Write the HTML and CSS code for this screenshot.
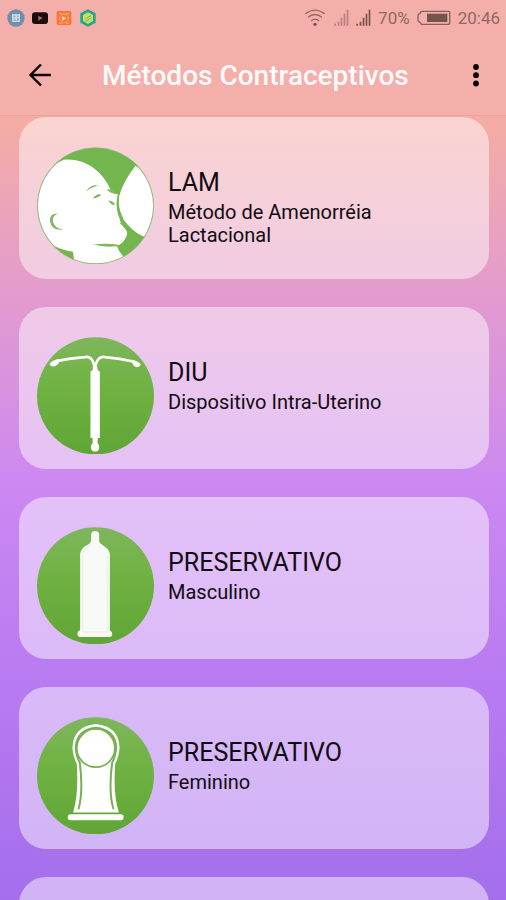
FILE: index.html
```html
<!DOCTYPE html>
<html lang="pt-BR">
<head>
<meta charset="utf-8">
<meta name="viewport" content="width=device-width, initial-scale=1">
<title>Métodos Contraceptivos</title>
<link rel="stylesheet" href="styles.css">
</head>
<body>
<header class="header">
  <div class="status">
    <div class="status-apps">
      <svg width="18" height="18" viewBox="0 0 54 54" aria-hidden="true"><circle cx="27" cy="27" r="26" fill="#6d90ac"/><path d="M15 15h24v24H15z" fill="#c9d8e8"/><path d="M20 20h5v5h-5zM30 20h5v3h-5zM30 28h5v7h-5zM20 31h6v4h-6z" fill="#8ba3bf"/></svg>
      <svg width="18" height="18" viewBox="0 0 54 54" aria-hidden="true"><rect x="3" y="10" width="48" height="35" rx="9" fill="#1c0d0c"/><path d="M22 20l13 7-13 8z" fill="#9d716e"/></svg>
      <svg width="18" height="18" viewBox="0 0 54 54" aria-hidden="true"><rect x="5" y="6" width="44" height="42" rx="5" fill="#fb7430"/><circle cx="27" cy="28" r="13" fill="none" stroke="#ffb488" stroke-width="3"/><path d="M12 13h8M34 13h8M12 43h8M34 43h8" stroke="#ffb488" stroke-width="3"/><path d="M22 22l12 6-12 7z" fill="#ffe1cf"/></svg>
      <svg width="18" height="18" viewBox="0 0 54 54" aria-hidden="true"><path d="M27 1l23 12v28L27 53 4 41V13z" fill="#24a58c"/><path d="M27 10l15 8v18l-15 9-15-9V18z" fill="#c7dd63"/><path d="M36 20L20 29M35 28L19 37" stroke="#7fb562" stroke-width="3"/></svg>
    </div>
    <div class="status-info">
      <svg class="wifi" width="20" height="18" viewBox="0 0 60 54" fill="none" stroke="#916662" stroke-width="4" aria-hidden="true"><path d="M1 14Q30-7 59 14M9 25Q30 8 51 25M18 36Q30 25 42 36"/><circle cx="30" cy="46" r="5" fill="#765350" stroke="none"/></svg>
      <svg class="signal" width="15" height="18" viewBox="0 0 45 54" aria-hidden="true"><path d="M1 44h5v6H1zM11 38h5v12h-5zM20 26h5v24h-5zM29 14h5v36h-5zM38 2h5v48h-5z" fill="#b9817c"/></svg>
      <svg class="signal" width="15" height="18" viewBox="0 0 45 54" aria-hidden="true"><path d="M1 44h5v6H1zM11 38h5v12h-5zM20 26h5v24h-5zM29 14h5v36h-5zM38 2h5v48h-5z" fill="#75524f"/></svg>
      <span>70%</span>
      <svg class="battery" width="34" height="18" viewBox="0 0 102 54" aria-hidden="true"><path d="M15 7h80q3 0 3 3v33q0 3-3 3H15q-4 0-5-5l-2-2q-5-1-5-6v-13q0-5 5-6l2-2q0-5 5-5z" fill="none" stroke="#85605d" stroke-width="4"/><path d="M30 14h61v25H30z" fill="#75534f"/></svg>
      <span>20:46</span>
    </div>
  </div>
  <div class="toolbar">
    <button class="icon-button" aria-label="Voltar"><svg width="24" height="24" viewBox="0 0 24 24" fill="none" stroke="#0b0707" stroke-width="2.400" aria-hidden="true"><path d="M23 11H2.500M13 .5L2.500 11L13 21.500"/></svg></button>
    <h1>Métodos Contraceptivos</h1>
    <button class="icon-button" aria-label="Mais opções"><svg width="24" height="24" viewBox="0 0 24 24" fill="#050303" aria-hidden="true"><circle cx="12" cy="3" r="2.900"/><circle cx="12" cy="11.200" r="2.900"/><circle cx="12" cy="19.500" r="2.900"/></svg></button>
  </div>
</header>
<svg class="defs" width="0" height="0" aria-hidden="true"><defs>
  <linearGradient id="green" x1="0" y1="0" x2="0" y2="1"><stop offset="0" stop-color="#7eb65c"/><stop offset=".4" stop-color="#70b344"/><stop offset="1" stop-color="#60a535"/></linearGradient>
  <clipPath id="disc"><circle cx="255" cy="286" r="172"/></clipPath>
</defs></svg>
<main class="list">
  <a class="card" href="#lam">
    <svg class="picture" viewBox="80 110 350 350" aria-hidden="true">
      <circle cx="255" cy="286" r="174" fill="#73b650" stroke="#9bb68d" stroke-width="2"/>
      <g clip-path="url(#disc)">
        <path d="M60 250Q110 166 160 148C220 143 275 177 303 244Q308 251 323 251L319 267Q316 300 327 324Q330 342 347 359Q353 371 345 382Q336 401 318 405Q326 429 348 445L330 480H190Q193 446 187 423Q150 418 122 401L60 350Z" fill="#fff"/>
        <path d="M372 165Q335 213 325 255Q320 294 336 323Q363 362 398 378L450 360V210Z" fill="#fff"/>
        <path d="M372 165Q335 213 323 257Q318 292 336 326" fill="none" stroke="#73b650" stroke-width="5"/>
        <path d="M226 244Q242 218 264 226Q244 229 226 244ZM246 264Q259 248 272 252Q267 261 246 264ZM288 236Q301 252 318 249L306 239ZM294 269Q299 284 314 283L307 274ZM327 339Q334 346 347 347L337 334ZM248 402Q285 397 322 402L318 407Q280 411 248 402ZM145 309Q116 307 119 333Q124 361 158 357Q131 352 127 331Q126 314 145 309Z" fill="#80b65d"/>
      </g>
    </svg>
    <div class="text"><h2>LAM</h2><p>Método de Amenorréia Lactacional</p></div>
  </a>
  <a class="card" href="#diu">
    <svg class="picture" viewBox="80 110 350 350" aria-hidden="true">
      <circle cx="255" cy="286" r="175" fill="url(#green)"/>
      <path d="M138 182Q180 173 224 170Q250 166 253 211Q257 166 283 170Q328 173 371 184" fill="none" stroke="#fff" stroke-width="8"/>
      <path d="M118 190Q125 178 150 176L144 190Q132 203 120 195ZM359 178Q382 179 391 193Q383 205 370 197Z" fill="#fff"/>
      <path d="M247 200h14v8l7 6v198h-6l-1 13 5 11q2 17-12 17t-13-17l6-11-1-13h-6V214l7-6z" fill="#fff"/>
    </svg>
    <div class="text"><h2>DIU</h2><p>Dispositivo Intra-Uterino</p></div>
  </a>
  <a class="card" href="#masculino">
    <svg class="picture" viewBox="80 110 350 350" aria-hidden="true">
      <circle cx="255" cy="286" r="175" fill="url(#green)"/>
      <path d="M242 133q0-11 12-11t12 11v20q2 7 16 15 16 9 16 27v224q7 3 7 11 0 9-7 9h-89q-8 0-8-9t8-11V195q0-18 16-28 15-8 17-16z" fill="#f8faf7"/>
      <path d="M218 190Q222 174 240 164M216 195v225M291 195v225M215 424h78" fill="none" stroke="#edf0ec" stroke-width="5"/>
    </svg>
    <div class="text"><h2>PRESERVATIVO</h2><p>Masculino</p></div>
  </a>
  <a class="card" href="#feminino">
    <svg class="picture" viewBox="80 110 350 350" aria-hidden="true">
      <circle cx="255" cy="286" r="175" fill="url(#green)"/>
      <path d="M188 396Q205 340 199 250Q188 230 186 201Q188 138 256 131Q325 138 327 201Q325 230 314 250Q307 340 325 396Z" fill="#fff"/>
      <path d="M204 386Q219 335 208 246Q197 226 196 201Q198 149 256 142Q315 149 317 201Q315 227 305 246Q293 335 309 386" fill="none" stroke="#77b053" stroke-width="6"/>
      <circle cx="256" cy="203" r="57" fill="#fff" stroke="#77b053" stroke-width="5"/>
      <rect x="172" y="401" width="167" height="18" rx="8" fill="#fff"/>
    </svg>
    <div class="text"><h2>PRESERVATIVO</h2><p>Feminino</p></div>
  </a>
  <div class="card"></div>
</main>
</body>
</html>
```
FILE: styles.css
```css
* { box-sizing: border-box; }

body {
  margin: 0;
  height: 100vh;
  overflow: hidden;
  display: flex;
  flex-direction: column;
  font-family: Roboto, "Liberation Sans", sans-serif;
  color: #120b12;
  background: linear-gradient(180deg, #f4afab 0%, #f4aca5 14%, #e29bce 33%, #cc88f2 54%, #b97bf1 75%, #a770ec 96%, #a56eea 100%);
}

h1, h2, p { margin: 0; font-weight: 400; }

.header {
  flex: none;
  background: #f4afab;
  border-bottom: 1px solid #eaa39f;
}

.status {
  height: 36px;
  padding: 0 6px 0 7px;
  display: flex;
  align-items: center;
  justify-content: space-between;
  color: #916864;
  font-size: 17px;
}

.status svg { display: block; }
.status-apps { display: flex; gap: 6px; }
.status-info { display: flex; align-items: center; gap: 7px; }
.status-info .wifi { margin-right: 2px; }

.toolbar {
  height: 79px;
  padding: 0 18px 0 28px;
  display: flex;
  align-items: center;
}

.toolbar h1 {
  flex: 1;
  padding-left: 50px;
  color: #fffafa;
  font-size: 28px;
  font-weight: 500;
  line-height: 36px;
  white-space: nowrap;
}

.icon-button {
  padding: 0;
  border: 0;
  background: none;
  display: flex;
  cursor: pointer;
}

.defs { position: absolute; }

.list {
  flex: 1;
  min-height: 0;
  overflow: hidden;
  padding: 1px 17px 0 19px;
  display: flex;
  flex-direction: column;
  gap: 28px;
}

.card {
  flex: none;
  min-height: 162px;
  padding: 30px 18px 12px;
  display: flex;
  gap: 14px;
  border-radius: 27px;
  background: rgba(255, 255, 255, .48);
  color: inherit;
  text-decoration: none;
}

.picture { flex: none; width: 117px; height: 117px; }

.text { padding-top: 20px; }

.text h2 { font-size: 25px; line-height: 32px; }

.text p {
  max-width: 230px;
  font-size: 20px;
  line-height: 23px;
  padding-top: 2px;
}
```
